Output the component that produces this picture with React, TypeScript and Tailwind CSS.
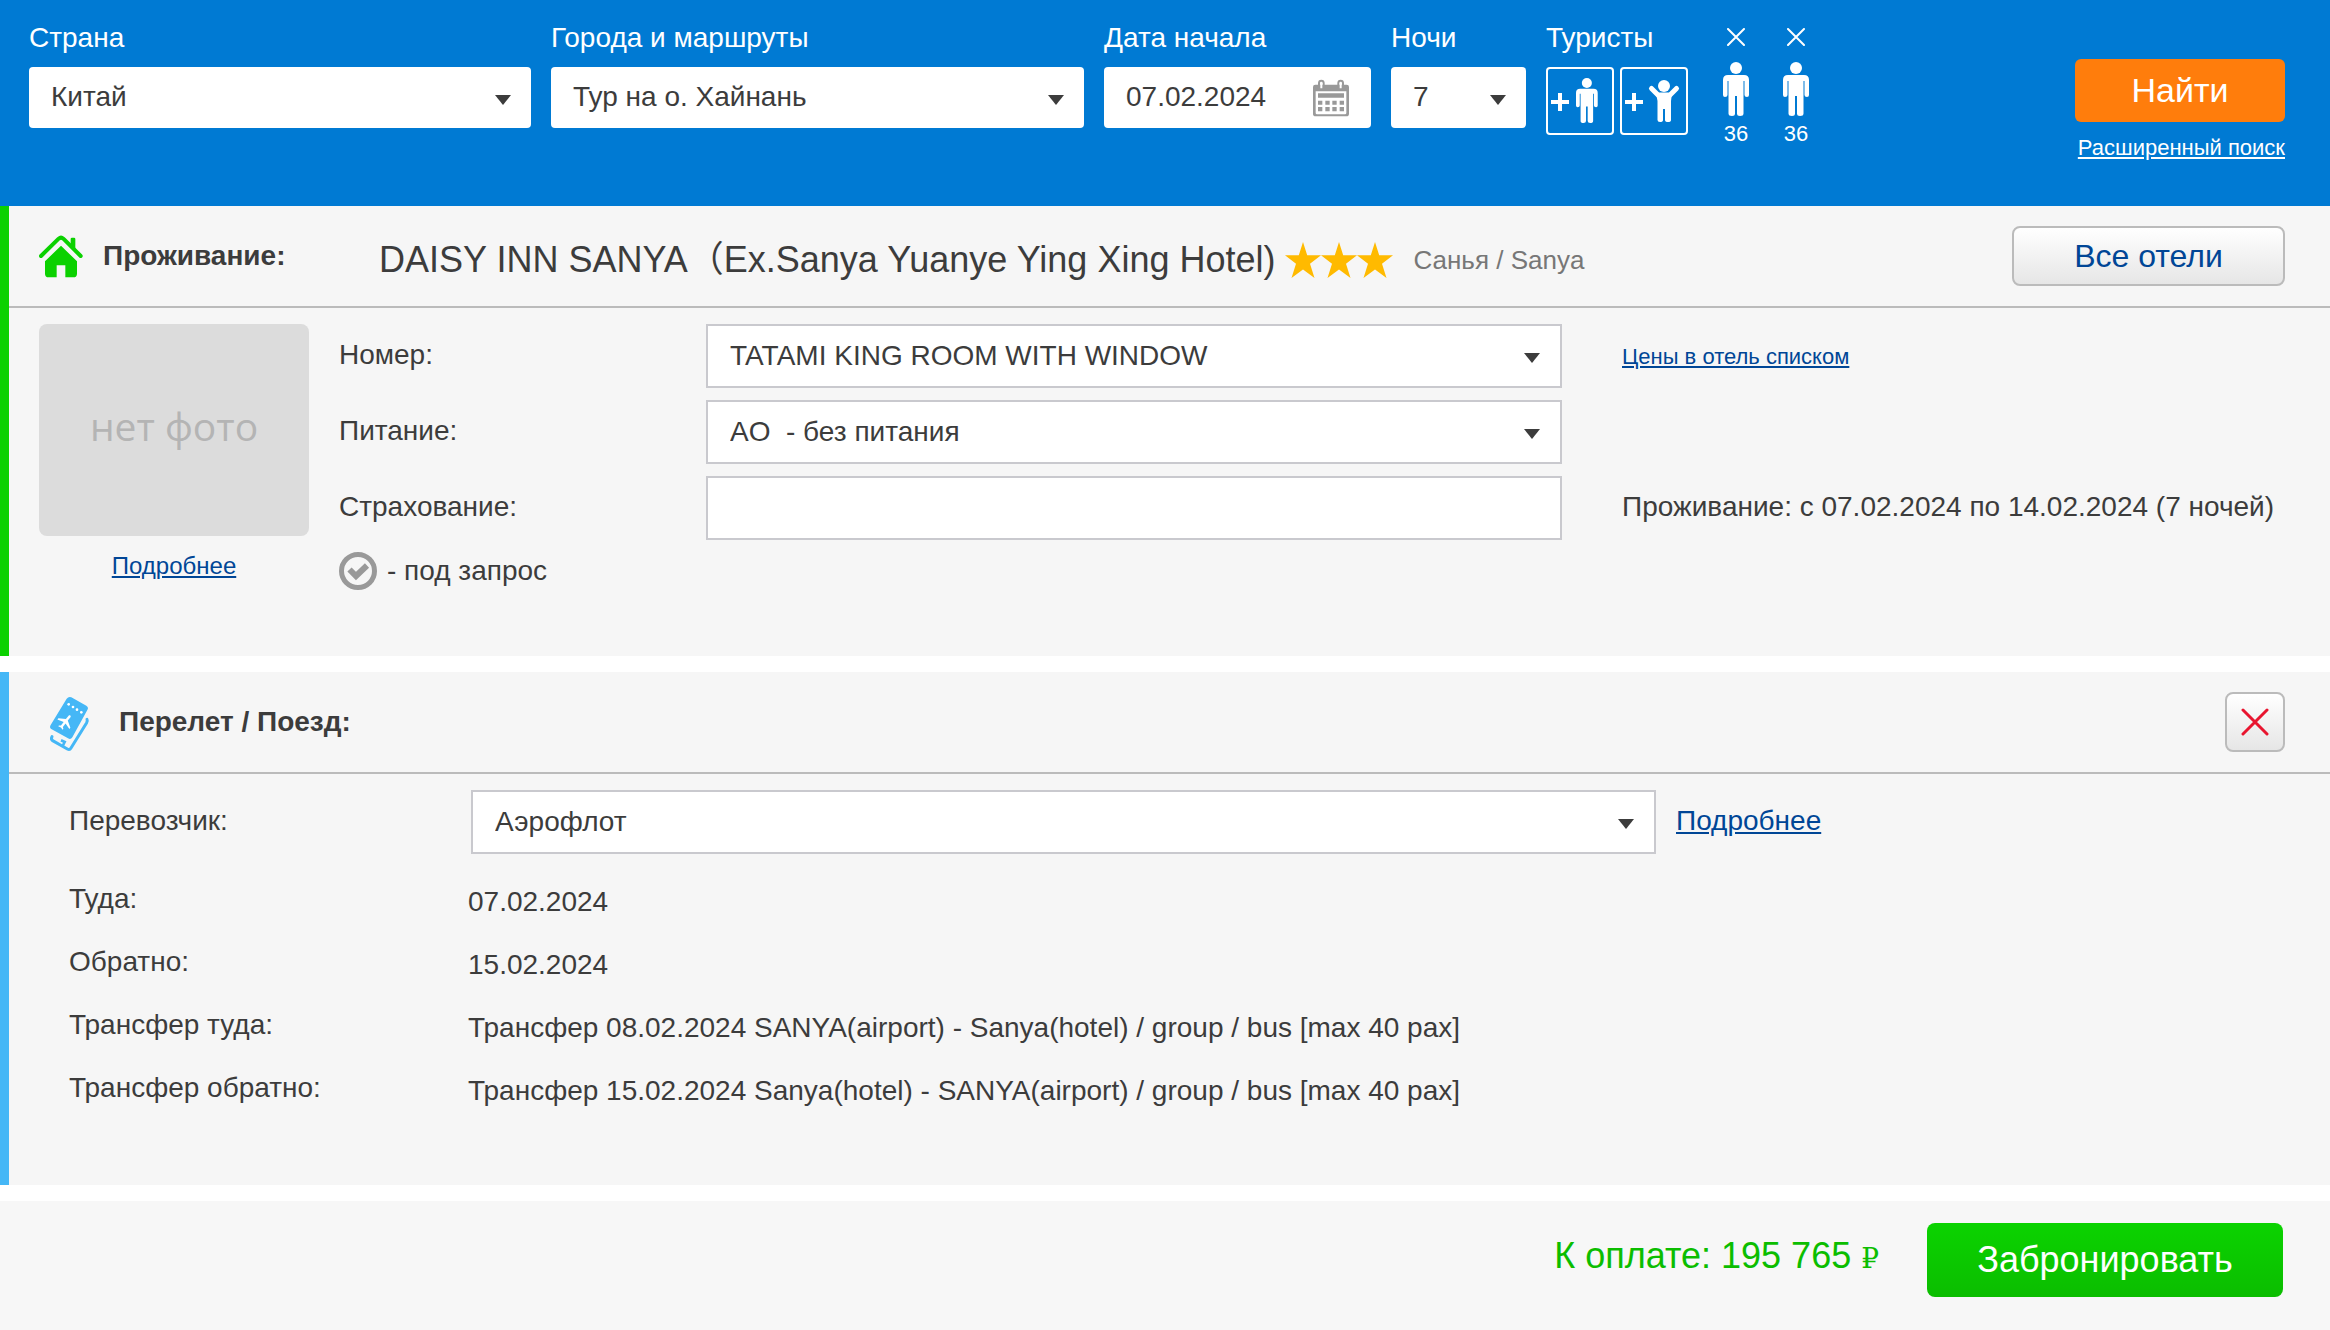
import { useState } from "react";
import type { ReactNode } from "react";

const HouseIcon = () => (
  <svg className="w-11 h-[43px] shrink-0" viewBox="27 44 132 129" fill="#0bd100" aria-hidden="true">
    <path d="M33 107 L86 55 Q93 49 100 55 L152 107" fill="none" stroke="#0bd100" strokeWidth="12" strokeLinecap="round" strokeLinejoin="round" />
    <path d="M122 56 Q122 52 126 52 H132 Q136 52 136 56 V86 L122 72 Z" />
    <path d="M93 76 L141 123 V160 Q141 171 130 171 H106 V135 H80 V171 H56 Q45 171 45 160 V123 Z" />
  </svg>
);

const TicketIcon = () => (
  <svg className="w-[60px] h-[70px] shrink-0" viewBox="0 0 180 210" aria-hidden="true">
    <path
      d="M94 31 L139 56 Q147 61 142 69 L97 151 Q92 159 84 154 L35 127 Q27 122 32 114 L80 35 Q86 27 94 31 Z"
      fill="#45b7f6"
    />
    <path d="M141 97 Q143 101 140 107 L93 183 Q89 190 82 186 L38 161 Q32 157 36 149" fill="none" stroke="#45b7f6" strokeWidth="9" strokeLinecap="round" />
    <path d="M68 177 L74 165 L63 160" fill="none" stroke="#45b7f6" strokeWidth="8" />
    <g fill="#fff">
      <circle cx="86" cy="52" r="4" />
      <circle cx="99" cy="60" r="4" />
      <circle cx="111" cy="68" r="4" />
      <circle cx="124" cy="76" r="4" />
      <path
        transform="translate(77 105) rotate(38) scale(2.4) translate(-12 -12)"
        d="M21 16v-2l-8-5V3.5c0-.83-.67-1.5-1.5-1.5S10 2.67 10 3.5V9l-8 5v2l8-2.5V19l-2 1.5V22l3.5-1 3.5 1v-1.5L13 19v-5.5l8 2.5z"
      />
    </g>
  </svg>
);

const CalendarIcon = () => (
  <svg className="w-[38px] h-[38px]" viewBox="126 54 114 114" aria-hidden="true">
    <path d="M136 71 H230 Q237 71 237 78 V158 Q237 166 229 166 H137 Q129 166 129 158 V78 Q129 71 136 71 Z" fill="#999" />
    <path d="M137 91 H229 V156 Q229 160 225 160 H141 Q137 160 137 156 Z" fill="#fff" />
    <path d="M147 81 V66 Q147 59 154 59 Q161 59 161 66 V81 M205 81 V66 Q205 59 212 59 Q219 59 219 66 V81" fill="none" stroke="#999" strokeWidth="6" />
    <path d="M151 66 h6 v16 h-6z M209 66 h6 v16 h-6z" fill="#fff" />
    <path
      d="M144 97 h78 v13 h-78z M144 119 h13 v12 h-13z M166 119 h13 v12 h-13z M187 119 h13 v12 h-13z M209 119 h13 v12 h-13z M144 138 h13 v13 h-13z M166 138 h13 v13 h-13z M187 138 h13 v13 h-13z M209 138 h13 v13 h-13z"
      fill="#999"
    />
  </svg>
);

const Adult = () => (
  <g fill="#fff">
    <circle cx="13" cy="6" r="6" />
    <path d="M5 13 H21 Q26 13 26 18 V33 Q26 35 24 35 Q21.500 35 21.500 33 V19 H20.500 V51.500 Q20.500 54 17 54 Q14 54 14 51.500 V34 H12 V51.500 Q12 54 9 54 Q5.500 54 5.500 51.500 V19 H4.500 V33 Q4.500 35 2 35 Q0 35 0 33 V18 Q0 13 5 13 Z" />
  </g>
);

const AddAdultIcon = () => (
  <svg className="w-16 h-16" viewBox="2 2 64 64" aria-hidden="true">
    <path d="M5 35 H23 M14 26 V44" stroke="#fff" strokeWidth="4" />
    <g transform="translate(30 11) scale(.835)">
      <Adult />
    </g>
  </svg>
);

const AddChildIcon = () => (
  <svg className="w-16 h-16" viewBox="2 2 64 64" aria-hidden="true">
    <path d="M5 35 H23 M14 26 V44" stroke="#fff" strokeWidth="4" />
    <circle cx="44" cy="19" r="6" fill="#fff" />
    <path d="M31.500 21.500 L38 28 M56.500 21.500 L50 28" stroke="#fff" strokeWidth="5" strokeLinecap="round" />
    <path d="M36 26 L40 25.500 H48 L52 26 L51 34 V53 Q51 55 48 55 Q45 55 45 53 V42 H43 V53 Q43 55 40 55 Q37.500 55 37.500 53 V34 Z" fill="#fff" />
  </svg>
);

const Star = () => (
  <svg className="w-9 h-9" viewBox="0 0 36 36" fill="#ffba00" aria-hidden="true">
    <path d="M18 0 L22.200 13.200 H36 L25 21.800 L29.500 36 L18 27.500 L6.500 36 L11 21.800 L0 13.200 H13.800 Z" />
  </svg>
);

const CheckCircle = () => (
  <svg className="w-[38px] h-[38px] shrink-0" viewBox="0 0 38 38" fill="none" stroke="#999" aria-hidden="true">
    <circle cx="19" cy="19" r="16.500" strokeWidth="5" />
    <path d="M10.500 17.500 L17 24 L28 13.500" strokeWidth="6" />
  </svg>
);

const Arrow = () => (
  <svg className="absolute right-5 top-1/2 mt-[-3px] w-4 h-[10px] pointer-events-none" viewBox="0 0 16 10" fill="#3c3c3c" aria-hidden="true">
    <path d="M0 0 H16 L8 10 Z" />
  </svg>
);

const Select = ({ id, value, className }: { id: string; value: string; className: string }) => (
  <div className={`relative bg-white ${className}`}>
    <select id={id} className="block w-full h-full appearance-none pl-[22px] pr-12 pb-px whitespace-pre outline-none">
      <option>{value}</option>
    </select>
    <Arrow />
  </div>
);

type SearchFieldProps = { id: string; label: string; className: string; children: ReactNode };

const SearchField = ({ id, label, className, children }: SearchFieldProps) => (
  <div className={className}>
    <label htmlFor={id} className="block mb-2 leading-[42px] text-white whitespace-nowrap">
      {label}
    </label>
    {children}
  </div>
);

const SearchBar = () => {
  const [date, setDate] = useState("07.02.2024");

  return (
    <header className="flex gap-5 bg-[#007ad3] pt-[17px] pb-11 pl-[29px] pr-[45px]">
      <SearchField id="country" label="Страна" className="flex-1 max-w-[502px]">
        <Select id="country" value="Китай" className="h-[61px] rounded" />
      </SearchField>
      <SearchField id="route" label="Города и маршруты" className="flex-1 max-w-[533px]">
        <Select id="route" value="Тур на о. Хайнань" className="h-[61px] rounded" />
      </SearchField>
      <SearchField id="date" label="Дата начала" className="w-[267px] shrink-0">
        <div className="flex items-center h-[61px] pl-[22px] pr-[21px] bg-white rounded">
          <input
            id="date"
            type="text"
            value={date}
            onChange={(e) => setDate(e.target.value)}
            className="flex-1 min-w-0 pb-px outline-none"
          />
          <button type="button" aria-label="Календарь">
            <CalendarIcon />
          </button>
        </div>
      </SearchField>
      <SearchField id="nights" label="Ночи" className="w-[135px] shrink-0">
        <Select id="nights" value="7" className="h-[61px] rounded" />
      </SearchField>

      <div className="flex gap-[18px] text-white">
        <div>
          <div className="mb-2 leading-[42px]">Туристы</div>
          <div className="flex gap-[6px]">
            <button type="button" aria-label="Добавить взрослого" className="w-[68px] h-[68px] border-2 border-white rounded">
              <AddAdultIcon />
            </button>
            <button type="button" aria-label="Добавить ребенка" className="w-[68px] h-[68px] border-2 border-white rounded">
              <AddChildIcon />
            </button>
          </div>
        </div>
        <div className="flex">
          {["first", "second"].map((key) => (
            <div key={key} className="flex flex-col items-center w-[60px]">
              <button type="button" aria-label="Удалить туриста" className="flex items-center justify-center w-10 h-10">
                <svg className="w-[18px] h-[18px]" viewBox="0 0 18 18" stroke="#fff" strokeWidth="2" strokeLinecap="round" aria-hidden="true">
                  <path d="M1 1 L17 17 M17 1 L1 17" />
                </svg>
              </button>
              <svg className="mt-[5px] w-[26px] h-[54px]" viewBox="0 0 26 54" aria-hidden="true">
                <Adult />
              </svg>
              <span className="mt-[6px] text-[22px] leading-6">36</span>
            </div>
          ))}
        </div>
      </div>

      <div className="ml-auto mt-[42px] flex flex-col items-end">
        <button type="button" className="w-[210px] h-[63px] bg-[#ff7d0c] rounded-md text-[34px] text-white">
          Найти
        </button>
        <a href="#search" className="mt-3 text-[22px] leading-7 text-white underline whitespace-nowrap">
          Расширенный поиск
        </a>
      </div>
    </header>
  );
};

const FIELD = "h-16 border-2 border-[#c9c9ce]";

const Hotel = () => (
  <section className="border-l-[9px] border-[#0bd100] bg-[#f6f6f6]">
    <div className="flex items-center h-[102px] pl-[30px] pr-[45px] border-b-2 border-[#bbb]">
      <HouseIcon />
      <h2 className="w-[276px] shrink-0 ml-5 font-bold">Проживание:</h2>
      <div className="flex items-center pt-2 whitespace-nowrap">
        <span className="text-[36px]">DAISY INN SANYA（Ex.Sanya Yuanye Ying Xing Hotel)</span>
        <span className="flex ml-[10px]">
          <Star />
          <Star />
          <Star />
        </span>
        <span className="ml-5 text-[26px] text-[#777]">Санья / Sanya</span>
      </div>
      <button
        type="button"
        className="ml-auto w-[273px] h-[60px] shrink-0 border-2 border-[#bbb] rounded-lg bg-linear-to-b from-white to-[#e6e6e6] text-[32px] text-[#004696]"
      >
        Все отели
      </button>
    </div>

    <div className="flex gap-[30px] pt-4 pl-[30px] pb-[66px]">
      <div className="w-[270px] shrink-0 text-center">
        <div className="flex items-center justify-center h-[212px] rounded-lg bg-[#dcdcdc] pb-2 font-['Open_Sans',sans-serif] text-[39px] text-[#b4b4b4]">
          нет фото
        </div>
        <a href="#hotel" className="inline-block mt-[14px] text-2xl text-[#004696] underline">
          Подробнее
        </a>
      </div>
      <div className="flex-1">
        <div className="grid grid-cols-[367px_minmax(0,856px)_auto] gap-y-3 justify-start items-center">
          <label htmlFor="room" className="pb-0.5">Номер:</label>
          <Select id="room" value="TATAMI KING ROOM WITH WINDOW" className={FIELD} />
          <a href="#prices" className="ml-[60px] text-[22px] text-[#004696] underline whitespace-nowrap">
            Цены в отель списком
          </a>
          <label htmlFor="meal" className="pb-0.5">Питание:</label>
          <Select id="meal" value={"AO\u00a0 - без питания"} className={FIELD} />
          <span />
          <label htmlFor="insurance" className="pb-0.5">Страхование:</label>
          <input id="insurance" type="text" className={`${FIELD} w-full bg-white px-[22px]`} />
          <span className="ml-[60px] pb-0.5 whitespace-nowrap">Проживание: с 07.02.2024 по 14.02.2024 (7 ночей)</span>
        </div>
        <div className="flex items-center gap-[10px] h-[38px] mt-3">
          <CheckCircle />
          <span>- под запрос</span>
        </div>
      </div>
    </div>
  </section>
);

const details = [
  { label: "Туда:", value: "07.02.2024" },
  { label: "Обратно:", value: "15.02.2024" },
  { label: "Трансфер туда:", value: "Трансфер 08.02.2024 SANYA(airport) - Sanya(hotel) / group / bus [max 40 pax]" },
  { label: "Трансфер обратно:", value: "Трансфер 15.02.2024 Sanya(hotel) - SANYA(airport) / group / bus [max 40 pax]" },
];

const Flight = () => (
  <section className="mt-4 border-l-[9px] border-[#45b7f6] bg-[#f6f6f6]">
    <div className="flex items-center h-[102px] pl-[31px] pr-[45px] border-b-2 border-[#bbb]">
      <TicketIcon />
      <h2 className="ml-[19px] font-bold">Перелет / Поезд:</h2>
      <button
        type="button"
        aria-label="Удалить перелет"
        className="ml-auto flex items-center justify-center w-[60px] h-[60px] border-2 border-[#bbb] rounded-lg bg-linear-to-b from-white to-[#e6e6e6]"
      >
        <svg className="w-7 h-7" viewBox="0 0 28 28" stroke="#e8152f" strokeWidth="3" strokeLinecap="round" aria-hidden="true">
          <path d="M2 2 L26 26 M26 2 L2 26" />
        </svg>
      </button>
    </div>

    <div className="pt-4 pl-[60px] pb-[65px]">
      <div className="flex items-center">
        <label htmlFor="carrier" className="w-[402px] shrink-0 pb-0.5">Перевозчик:</label>
        <div className="flex-1 max-w-[1185px]">
          <Select id="carrier" value="Аэрофлот" className={FIELD} />
        </div>
        <a href="#flight" className="mx-5 pb-0.5 text-[#004696] underline">Подробнее</a>
      </div>
      <dl className="mt-[14px]">
        {details.map((row) => (
          <div key={row.label} className="flex items-center h-[63px]">
            <dt className="w-[399px] shrink-0 pb-0.5">{row.label}</dt>
            <dd className="pt-1">{row.value}</dd>
          </div>
        ))}
      </dl>
    </div>
  </section>
);

const Footer = () => (
  <footer className="flex-1 flex items-start justify-end gap-12 mt-4 pt-[22px] pb-8 pr-[47px] bg-[#f7f7f7] text-[36px]">
    <div className="pt-[6px] text-[#0bbd00]">
      К оплате: 195 765 <span className="font-['DejaVu_Serif',serif] text-[28px]">₽</span>
    </div>
    <button type="button" className="w-[356px] h-[74px] rounded-lg bg-linear-to-b from-[#0bd300] to-[#0bbd00] text-white">
      Забронировать
    </button>
  </footer>
);

export default function App() {
  return (
    <div className="flex flex-col min-h-screen bg-white font-['Liberation_Sans','Noto_Sans_CJK_SC',sans-serif] text-[28px] text-[#3c3c3c]">
      <SearchBar />
      <Hotel />
      <Flight />
      <Footer />
    </div>
  );
}
